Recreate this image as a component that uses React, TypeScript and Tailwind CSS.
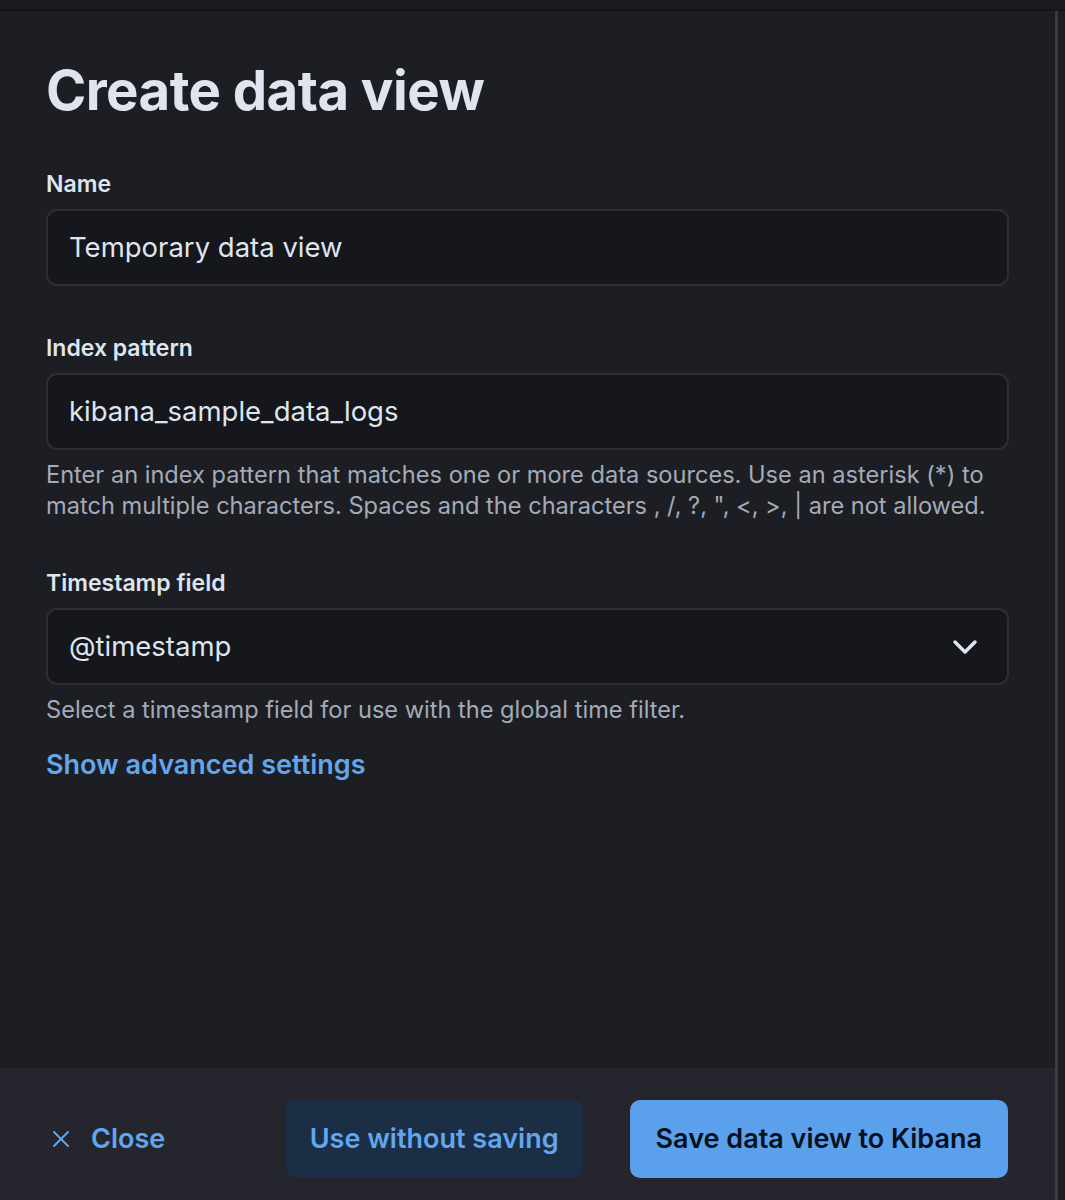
import { ChevronDown, X } from "lucide-react";

const font = "font-['Inter','Liberation_Sans',sans-serif]";

function Field({
  label,
  value,
  help,
  select,
}: {
  label: string;
  value: string;
  help?: React.ReactNode;
  select?: boolean;
}) {
  return (
    <div className="flex flex-col">
      <label className="text-[23px] leading-[32px] font-semibold text-[#dfe5ef]">{label}</label>
      <div className="mt-[9px] flex h-[77px] items-center justify-between rounded-[11px] border-2 border-[#2c2e35] bg-[#16171c] pl-[21px] pr-[22px]">
        <span className="text-[27.5px] text-[#dfe5ef]">{value}</span>
        {select ? <ChevronDown className="h-[40px] w-[40px] text-[#dfe5ef]" strokeWidth={2.1} /> : null}
      </div>
      {help ? <p className="mt-[9px] text-[23.6px] leading-[31px] text-[#a3abb8]">{help}</p> : null}
    </div>
  );
}

export default function App() {
  return (
    <div className={`flex h-[1200px] w-[1065px] flex-col bg-[#1d1e24] ${font}`}>
      <div className="h-[11px] shrink-0 border-b-2 border-[#15161a] bg-[#1a1b20]" />
      <div className="flex min-h-0 flex-1">
        <div className="flex w-[1055px] flex-col">
          <main className="flex flex-1 flex-col px-[46px] pt-[44px]">
            <h1 className="text-[54.5px] leading-[70px] font-bold tracking-[-0.01em] text-[#dfe5ef]">
              Create data view
            </h1>
            <div className="mt-[43px] flex flex-col gap-[46px]">
              <Field label="Name" value="Temporary data view" />
              <Field
                label="Index pattern"
                value="kibana_sample_data_logs"
                help={
                  <>
                    Enter an index pattern that matches one or more data sources. Use an asterisk (*) to
                    match multiple characters. Spaces and the characters , /, ?, ", &lt;, &gt;, | are not
                    allowed.
                  </>
                }
              />
              <Field
                label="Timestamp field"
                value="@timestamp"
                select
                help="Select a timestamp field for use with the global time filter."
              />
            </div>
            <a className="mt-[22px] text-[27px] leading-[36px] font-semibold text-[#61a7ef]">
              Show advanced settings
            </a>
          </main>
          <footer className="flex h-[132px] shrink-0 items-center bg-[#25262d] pt-[10px] pl-[47px] pr-[47px]">
            <button type="button" className="flex items-center gap-[16px] text-[27px] font-semibold text-[#61a7ef]">
              <X className="h-[28px] w-[28px]" strokeWidth={1.6} />
              Close
            </button>
            <div className="ml-auto flex gap-[47px]">
              <button
                type="button"
                className="h-[78px] rounded-[10px] bg-[#1b2e46] px-[24px] text-[27px] font-semibold text-[#61a7ef]"
              >
                Use without saving
              </button>
              <button
                type="button"
                className="h-[78px] rounded-[10px] bg-[#5aa0ea] px-[26px] text-[27px] font-semibold text-[#07101f]"
              >
                Save data view to Kibana
              </button>
            </div>
          </footer>
        </div>
        <div className="w-[3px] bg-[#3a3c44]" />
        <div className="flex-1 bg-[#1d1e24]" />
      </div>
    </div>
  );
}
